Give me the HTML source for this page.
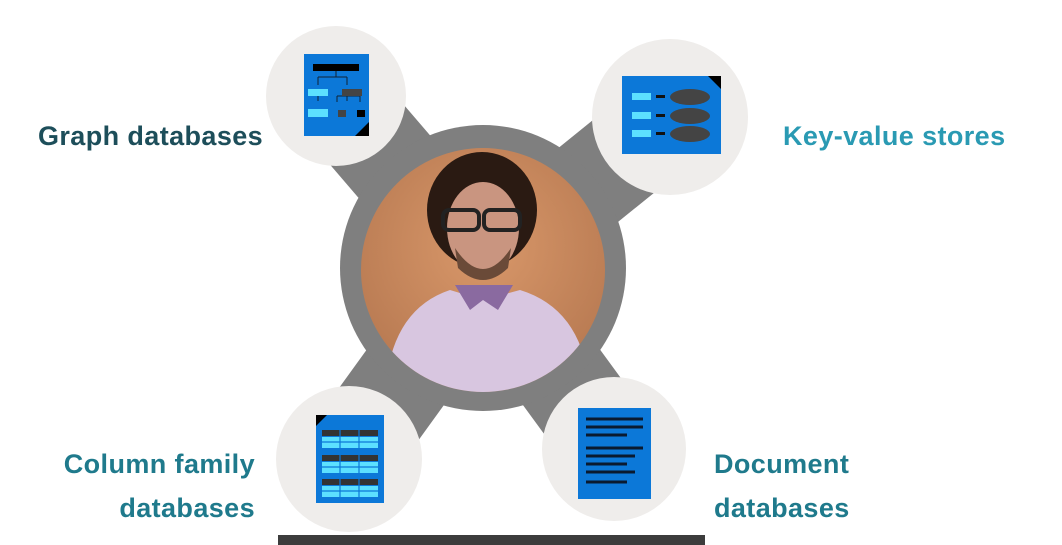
<!DOCTYPE html>
<html><head><meta charset="utf-8"><style>
html,body{margin:0;padding:0;background:#fff;width:1062px;height:545px;overflow:hidden;position:relative;font-family:"Liberation Sans",sans-serif}
.t{position:absolute;font-weight:bold;font-size:27px;letter-spacing:0.4px;line-height:44px;white-space:nowrap}
</style></head><body>
<svg width="1062" height="545" style="position:absolute;left:0;top:0">
<defs>
<radialGradient id="bg" cx="50%" cy="40%" r="60%"><stop offset="0" stop-color="#d9986a"/><stop offset="1" stop-color="#b87a52"/></radialGradient>
<clipPath id="cp"><circle cx="483" cy="270" r="122"/></clipPath>
</defs>
<g stroke="#7f7f7f" stroke-width="95" stroke-linecap="round">
<line x1="483" y1="270" x2="350" y2="115"/>
<line x1="483" y1="270" x2="650" y2="135"/>
<line x1="483" y1="270" x2="360" y2="440"/>
<line x1="483" y1="270" x2="600" y2="430"/>
</g>
<circle cx="483" cy="268" r="143" fill="#7f7f7f"/>
<g clip-path="url(#cp)">
<rect x="360" y="148" width="246" height="246" fill="url(#bg)"/>
<ellipse cx="482" cy="210" rx="55" ry="58" fill="#2a1a12"/>
<ellipse cx="483" cy="228" rx="36" ry="46" fill="#c99580"/>
<path d="M455 248 Q483 290 511 248 L508 268 Q483 292 458 268Z" fill="#6a4a38"/>
<rect x="443" y="210" width="36" height="20" rx="6" fill="none" stroke="#222" stroke-width="4"/>
<rect x="484" y="210" width="36" height="20" rx="6" fill="none" stroke="#222" stroke-width="4"/>
<path d="M385 394 Q390 310 450 290 L483 300 L520 290 Q585 310 590 394Z" fill="#d8c6e0"/>
<path d="M455 285 L470 310 L483 300 L498 310 L513 285" fill="#8a6aa0"/>
</g>
<circle cx="336" cy="96" r="70" fill="#efedeb"/>
<circle cx="670" cy="117" r="78" fill="#efedeb"/>
<circle cx="349" cy="459" r="73" fill="#efedeb"/>
<circle cx="614" cy="449" r="72" fill="#efedeb"/>
<rect x="304" y="54" width="65" height="82" fill="#0c78d8"/>
<path d="M369 122 L369 136 L355 136Z" fill="#000"/>
<rect x="313" y="64" width="46" height="7" fill="#000"/>
<path d="M336 71 V77 M318 77 H347 M318 77 V85 M347 77 V85 M318 91 V101 M347 91 V101 M337 96 H360 M337 96 V102 M360 96 V102" stroke="#123" stroke-width="1"/>
<rect x="308" y="89" width="20" height="7" fill="#5ce0ff"/>
<rect x="342" y="89" width="20" height="7" fill="#444"/>
<rect x="308" y="109" width="20" height="8" fill="#5ce0ff"/>
<rect x="338" y="110" width="8" height="7" fill="#444"/>
<rect x="357" y="110" width="8" height="7" fill="#000"/>
<rect x="622" y="76" width="99" height="78" fill="#0c78d8"/>
<path d="M708 76 L721 76 L721 89Z" fill="#000"/>
<g fill="#5ce0ff"><rect x="632" y="93" width="19" height="7"/><rect x="632" y="112" width="19" height="7"/><rect x="632" y="130" width="19" height="7"/></g>
<g fill="#111"><rect x="656" y="95" width="9" height="3"/><rect x="656" y="114" width="9" height="3"/><rect x="656" y="132" width="9" height="3"/></g>
<g fill="#444"><ellipse cx="690" cy="97" rx="20" ry="8"/><ellipse cx="690" cy="116" rx="20" ry="8"/><ellipse cx="690" cy="134" rx="20" ry="8"/></g>
<rect x="316" y="415" width="68" height="88" fill="#0c78d8"/>
<path d="M316 415 L327 415 L316 426Z" fill="#000"/>
<g>
<rect x="322" y="430" width="56" height="6" fill="#333"/><rect x="322" y="437" width="56" height="11" fill="#5ce0ff"/>
<rect x="322" y="455" width="56" height="6" fill="#333"/><rect x="322" y="462" width="56" height="11" fill="#5ce0ff"/>
<rect x="322" y="479" width="56" height="6" fill="#333"/><rect x="322" y="486" width="56" height="11" fill="#5ce0ff"/>
<path d="M340 430 V448 M359 430 V448 M340 455 V473 M359 455 V473 M340 479 V497 M359 479 V497 M322 442 H378 M322 467 H378 M322 491 H378" stroke="#0c78d8" stroke-width="1.2"/>
</g>
<rect x="578" y="408" width="73" height="91" fill="#0c78d8"/>
<g stroke="#0a1a30" stroke-width="3">
<path d="M586 419 H643 M586 427 H643 M586 435 H627 M586 448 H643 M586 456 H635 M586 464 H627 M586 472 H635 M586 482 H627"/>
</g>
<rect x="278" y="535" width="427" height="10" fill="#3c3c3c"/>
</svg>
<div class="t" style="left:38px;top:114px;color:#1d4e5a">Graph databases</div>
<div class="t" style="left:783px;top:114px;color:#2a9ab3">Key-value stores</div>
<div class="t" style="right:807px;top:442px;text-align:right;color:#1f7a8c">Column family<br>databases</div>
<div class="t" style="left:714px;top:442px;color:#1f7a8c">Document<br>databases</div>
</body></html>
